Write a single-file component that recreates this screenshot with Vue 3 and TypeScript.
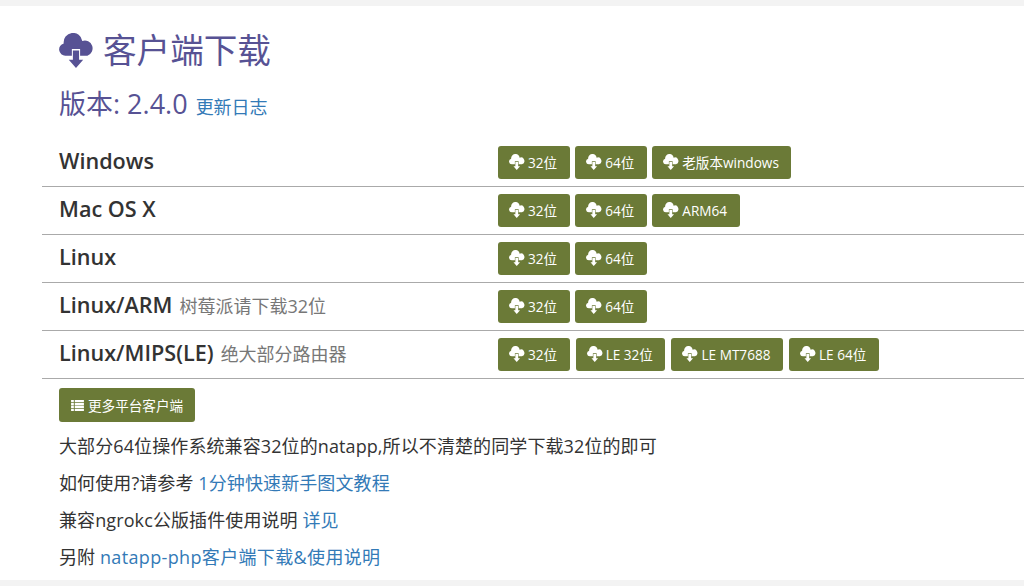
<script setup lang="ts">
interface Platform {
  name: string
  note?: string
  builds: string[]
}

const platforms: Platform[] = [
  { name: 'Windows', builds: ['32位', '64位', '老版本windows'] },
  { name: 'Mac OS X', builds: ['32位', '64位', 'ARM64'] },
  { name: 'Linux', builds: ['32位', '64位'] },
  { name: 'Linux/ARM', note: '树莓派请下载32位', builds: ['32位', '64位'] },
  { name: 'Linux/MIPS(LE)', note: '绝大部分路由器', builds: ['32位', 'LE 32位', 'LE MT7688', 'LE 64位'] }
]

// cloud with a notch at the bottom, the arrow sits in the notch
const cloudPath = 'M6.3 22A6 6 0 0 1 4.6 10.2A9 9 0 0 1 22.6 7.8A7.3 7.3 0 0 1 27.6 22H20.5V15.5H12.5V22Z'
const arrowPath = 'M13.5 17H19.5V26H23.5L16.5 34L9.5 26H13.5Z'
</script>

<template>
  <div class="page">
    <main class="panel">
      <h1 class="title">
        <svg class="title-icon" viewBox="0 0 34 34" aria-hidden="true">
          <path :d="cloudPath" />
          <path :d="arrowPath" />
        </svg>
        客户端下载
      </h1>
      <h3 class="version">版本: 2.4.0 <a class="log" href="#">更新日志</a></h3>

      <ul class="platforms">
        <li v-for="p in platforms" :key="p.name" class="platform">
          <div class="platform-name">
            <strong>{{ p.name }}</strong>
            <small v-if="p.note">{{ p.note }}</small>
          </div>
          <div class="builds">
            <a v-for="b in p.builds" :key="b" class="btn" href="#">
              <svg class="btn-icon" viewBox="0 0 34 34" aria-hidden="true">
                <path :d="cloudPath" />
                <path :d="arrowPath" />
              </svg>
              {{ b }}
            </a>
          </div>
        </li>
      </ul>

      <a class="btn btn-more" href="#">
        <svg class="list-icon" viewBox="0 0 14 12" aria-hidden="true">
          <path d="M0 0h3v2.4H0zM4 0h10v2.4H4zM0 3.2h3v2.4H0zM4 3.2h10v2.4H4zM0 6.4h3v2.4H0zM4 6.4h10v2.4H4zM0 9.6h3V12H0zM4 9.6h10V12H4z" />
        </svg>
        更多平台客户端
      </a>

      <p>大部分64位操作系统兼容32位的natapp,所以不清楚的同学下载32位的即可</p>
      <p>如何使用?请参考 <a href="#">1分钟快速新手图文教程</a></p>
      <p>兼容ngrokc公版插件使用说明 <a href="#">详见</a></p>
      <p>另附 <a class="wide" href="#">natapp-php客户端下载&amp;使用说明</a></p>
    </main>
  </div>
</template>

<style>
html,
body {
  background: #f3f3f3;
}
</style>

<style scoped>
.page {
  height: 586px;
  padding: 6px 0;
  box-sizing: border-box;
  overflow: hidden;
  font-family: "Open Sans", "Noto Sans CJK SC", sans-serif;
  color: #333;
}

.panel {
  height: 574px;
  padding: 0 0 0 42px;
  box-sizing: border-box;
  background: #fff;
}

.title {
  display: flex;
  align-items: center;
  gap: 9.5px;
  height: 54px;
  margin: 0;
  padding: 17px 0 0 16.5px;
  font-size: 33.6px;
  font-weight: 400;
  line-height: 54px;
  color: #575294;
}

.title-icon {
  width: 35px;
  height: 35px;
  fill: #575294;
}

.version {
  height: 34px;
  margin: 10px 0 0 17px;
  font-size: 27px;
  font-weight: 400;
  line-height: 34px;
  color: #575294;
}

.log {
  margin-left: 1px;
  font-size: 18px;
}

a {
  color: #337ab7;
  text-decoration: none;
}

.platforms {
  margin: 18px 0 0;
  padding: 0;
  list-style: none;
}

.platform {
  display: flex;
  align-items: flex-start;
  height: 48px;
  padding-top: 7px;
  box-sizing: border-box;
  border-bottom: 1px solid #aaa;
}

.platform-name {
  width: 456px;
  margin-top: 1px;
  padding-left: 17px;
  box-sizing: border-box;
  line-height: 28px;
}

.platform-name strong {
  font-size: 21.6px;
  font-weight: 600;
}

.platform-name small {
  margin-left: 7px;
  font-size: 18px;
  color: #777;
}

.builds {
  display: flex;
  gap: 5.5px;
}

.platform:last-child .builds {
  gap: 6px;
}

.btn {
  display: flex;
  align-items: center;
  gap: 3px;
  height: 33px;
  padding: 0 12.5px 1px 11px;
  box-sizing: border-box;
  border-radius: 3px;
  background: #6b7a37;
  color: #fff;
  font-size: 13.6px;
  white-space: nowrap;
}

.btn-icon {
  width: 16px;
  height: 16px;
  fill: #fff;
}

.btn-more {
  display: inline-flex;
  gap: 4px;
  height: 34px;
  margin: 9px 0 0 17px;
  padding: 0 12px;
}

.list-icon {
  width: 13px;
  height: 11px;
  fill: #fff;
}

p {
  height: 37px;
  margin: 0 0 0 17px;
  font-size: 18px;
  line-height: 37px;
  letter-spacing: 0.1px;
}

.wide {
  letter-spacing: 0.35px;
}

.btn-more + p {
  margin-top: 6px;
}
</style>
